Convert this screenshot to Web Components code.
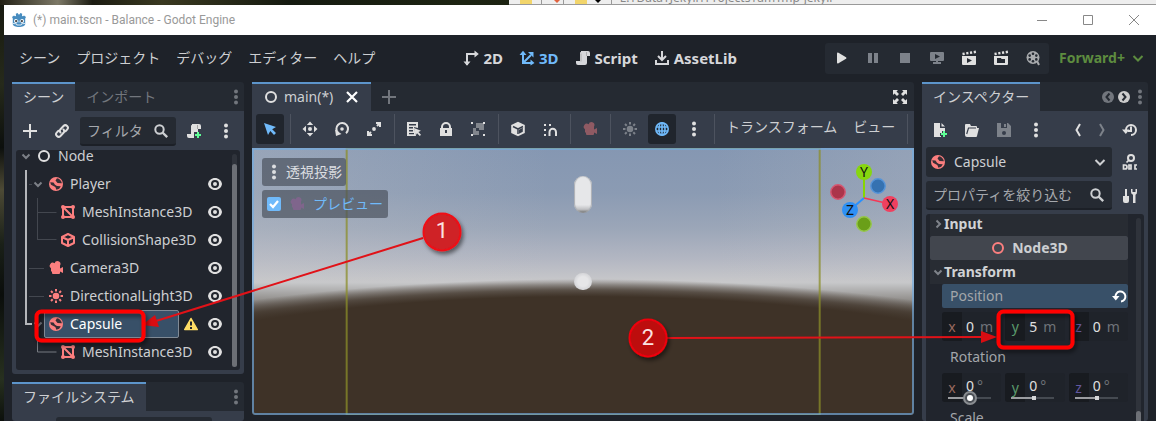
<!DOCTYPE html>
<html lang="ja">
<head>
<meta charset="utf-8">
<title>(*) main.tscn - Balance - Godot Engine</title>
<style>
  html, body { margin: 0; height: 100%; overflow: hidden; }
  body { font: 14px/20px "Noto Sans", "Noto Sans CJK JP", sans-serif; color: #cdcfd2; background: #14180f; }
</style>
</head>
<body>
<godot-desktop></godot-desktop>
<script>
const ICONS = {
  godot: '<path fill="#478cbf" d="M1 5l2-1.500 1 .8 1-.4L4.800 1.800 6.600 1l1 1.500h.8L9.400 1l1.800.8-.2 2.100 1 .4 1-.8L15 5l-.8 1.600V12c0 2-3 3-6.200 3s-6.200-1-6.200-3V6.600z"/><circle cx="4.900" cy="9" r="1.900" fill="#fff"/><circle cx="11.100" cy="9" r="1.900" fill="#fff"/><circle cx="5.100" cy="9.100" r="1.100" fill="#414042"/><circle cx="10.900" cy="9.100" r="1.100" fill="#414042"/><path d="M8 8.500v2M2 11.500l3.500.3.300 1.200h4.400l.3-1.200 3.500-.3" stroke="#fff" fill="none" stroke-width=".8"/>',
  plus: '<path d="M8 1v14M1 8h14" stroke="currentColor" stroke-width="2"/>',
  link: '<g fill="none" stroke="currentColor" stroke-width="2" stroke-linecap="round"><path d="M6.500 9.500a2.500 2.500 0 0 1 0-3.300L9.500 3a2.500 2.500 0 0 1 3.600 3.600L11.500 8.200"/><path d="M9.500 6.500a2.500 2.500 0 0 1 0 3.300L6.500 13a2.500 2.500 0 0 1-3.600-3.600L4.500 7.800"/></g>',
  search: '<circle cx="6.500" cy="6.500" r="4.200" fill="none" stroke="currentColor" stroke-width="2"/><path d="M9.500 9.500l4.700 4.700" stroke="currentColor" stroke-width="2.400"/>',
  script: '<path fill="currentColor" d="M6 1v1a1 1 0 0 0-1 1v8H1v2a2 2 0 0 0 2 2h7a2 2 0 0 0 2-2V6h3V3a2 2 0 0 0-2-2z"/><path d="M6 3.500v8M11.500 2v4" stroke="#0003" />',
  scriptadd: '<path fill="currentColor" d="M6 1v1a1 1 0 0 0-1 1v8H1v2a2 2 0 0 0 2 2h5V9h4V6h3V3a2 2 0 0 0-2-2z"/><path d="M11.500 2v4" stroke="#0004"/><path d="M12 9v6M9 12h6" stroke="#5fff97" stroke-width="2"/>',
  dots: '<g fill="currentColor"><circle cx="8" cy="2.500" r="2"/><circle cx="8" cy="8" r="2"/><circle cx="8" cy="13.500" r="2"/></g>',
  down: '<path d="M4.500 6.500L8 10l3.500-3.500" fill="none" stroke="currentColor" stroke-width="2"/>',
  bigdown: '<path d="M3.500 6L8 10.500 12.500 6" fill="none" stroke="currentColor" stroke-width="2"/>',
  right: '<path d="M6.500 4.500L10 8l-3.500 3.500" fill="none" stroke="currentColor" stroke-width="2"/>',
  node: '<circle cx="8" cy="8" r="5" fill="none" stroke="currentColor" stroke-width="2"/>',
  body: '<circle cx="8" cy="8" r="7" fill="#fc7f7f"/><path fill="#22262e" d="M9 2.200C11.500 2.600 13.500 4.500 13.900 7.300L9.500 7 7.500 4.500zM2.200 6.200L5.500 6.500 7 8.700l2 1.300 3.800.2-1.600 2.600-2.800 1L7.300 11 3 8.800z" opacity=".9"/><path fill="#fc7f7f" d="M3 9.500L7 12l1 2.500L4 13z"/>',
  mesh: '<g fill="none" stroke="#fc7f7f" stroke-width="2"><path d="M3 3h10v10H3zM3 3l10 10"/></g><g fill="#fc7f7f"><circle cx="3" cy="3" r="2"/><circle cx="13" cy="3" r="2"/><circle cx="3" cy="13" r="2"/><circle cx="13" cy="13" r="2"/></g>',
  shape: '<path d="M8 2l6 3v6l-6 3-6-3V5zM2 5l6 3 6-3M8 8v6" fill="none" stroke="#fc7f7f" stroke-width="2" stroke-linejoin="round"/>',
  camera: '<path fill="currentColor" d="M9.500 1A3 3 0 0 0 6.600 3.300 3 3 0 1 0 3 8.200V11l1 1v1a1 1 0 0 0 1 1h6a1 1 0 0 0 1-1v-1.500l3 1.500V7l-3 1.500V5.700A3 3 0 0 0 9.500 1z"/>',
  light: '<circle cx="8" cy="8" r="3.300" fill="currentColor"/><path d="M8 1v2.500M8 12.500V15M1 8h2.500M12.500 8H15M3 3l1.700 1.700M11.300 11.300L13 13M13 3l-1.700 1.700M4.700 11.300L3 13" stroke="currentColor" stroke-width="2"/>',
  eye: '<path fill="currentColor" d="M8 2C4.500 2 1.500 4.500 1 8c.5 3.500 3.500 6 7 6s6.500-2.500 7-6c-.5-3.500-3.500-6-7-6z"/><circle cx="8" cy="8" r="3" fill="none" stroke="#22262e" stroke-width="2"/>',
  warn: '<path fill="#ffdd65" stroke="#ffdd65" stroke-width="1.500" stroke-linejoin="round" d="M8 2.500L14.300 13.500H1.700z"/><path d="M8 5.500v4M8 11v2" stroke="#22262e" stroke-width="2"/>',
  d2: '<path d="M4 15V4h9" fill="none" stroke="currentColor" stroke-width="2"/><path fill="currentColor" d="M0.500 11.500h7L4 15.800zM11.500 0.500v7L15.800 4z"/>',
  d3: '<path d="M4 4v9h9M4 13l8-8" fill="none" stroke="currentColor" stroke-width="2"/><path fill="currentColor" d="M0.500 5L4 .8 7.500 5zM11.500 9.500v6L15.500 13zM9 2h5.500v5.500z"/>',
  asset: '<path d="M8 1v8M2 10v4h12v-4" fill="none" stroke="currentColor" stroke-width="2"/><path d="M4 6l4 4 4-4" fill="none" stroke="currentColor" stroke-width="2"/>',
  play: '<path fill="currentColor" d="M4 3.500v9a1 1 0 0 0 1.500.8l7.500-4.500a1 1 0 0 0 0-1.600L5.500 2.700A1 1 0 0 0 4 3.500z"/>',
  pause: '<path fill="currentColor" d="M3 3h4v10H3zM9 3h4v10H9z"/>',
  stop: '<path fill="currentColor" d="M3 3h10v10H3z"/>',
  remote: '<path fill="currentColor" fill-rule="evenodd" d="M2 2h12a1 1 0 0 1 1 1v7a1 1 0 0 1-1 1H9v1h3v2H4v-2h3v-1H2a1 1 0 0 1-1-1V3a1 1 0 0 1 1-1zM6 4v5l5-2.500z"/>',
  clapplay: '<path fill="currentColor" fill-rule="evenodd" d="M1 6h14v8a1 1 0 0 1-1 1H2a1 1 0 0 1-1-1zM6 8v5l5-2.500z"/><path d="M1.500 4L15 1.800" stroke="currentColor" stroke-width="2.500" stroke-dasharray="2.200 1.600"/>',
  clapdir: '<path fill="currentColor" fill-rule="evenodd" d="M1 6h14v8a1 1 0 0 1-1 1H2a1 1 0 0 1-1-1zM4 8v5h8V9H8.500L8 8z"/><path d="M1.500 4L15 1.800" stroke="currentColor" stroke-width="2.500" stroke-dasharray="2.200 1.600"/>',
  movie: '<circle cx="8" cy="7.500" r="6.500" fill="currentColor"/><path d="M12 11l2 4" stroke="currentColor" stroke-width="2"/><g fill="#252a32"><circle cx="8" cy="3.700" r="1.300"/><circle cx="8" cy="11.300" r="1.300"/><circle cx="4.700" cy="5.600" r="1.300"/><circle cx="11.300" cy="5.600" r="1.300"/><circle cx="4.700" cy="9.400" r="1.300"/><circle cx="11.300" cy="9.400" r="1.300"/></g>',
  close: '<path d="M3 3l10 10M13 3L3 13" stroke="currentColor" stroke-width="2.200"/>',
  expand: '<path fill="currentColor" d="M1 1h5L4.500 2.500 7 5 5 7 2.500 4.500 1 6zM15 1v5l-1.500-1.500L11 7 9 5l2.500-2.500L10 1zM1 15v-5l1.500 1.500L5 9l2 2-2.500 2.500L6 15zM15 15h-5l1.500-1.500L9 11l2-2 2.500 2.500L15 10z"/>',
  select: '<path fill="currentColor" d="M2 2l4 12 2.300-4L12 14l2-2-3.800-3.700L14 6z"/>',
  move: '<path fill="currentColor" d="M8 .5l3.200 3.500H4.800zM8 15.500l3.200-3.500H4.800zM.5 8L4 4.800v6.400zM15.500 8L12 4.800v6.400z"/><circle cx="8" cy="8" r="2" fill="currentColor"/>',
  rotate: '<path d="M4.200 12A5.800 5.800 0 1 1 12 12.200" fill="none" stroke="currentColor" stroke-width="2"/><circle cx="8" cy="8" r="1.800" fill="currentColor"/><path fill="currentColor" d="M1 8.500l1 6.500 5.500-2z"/>',
  scale: '<path d="M10 2h4v4M6 14H2v-4M13.500 2.500l-2.500 2.500M5 11l-2.500 2.500" fill="none" stroke="currentColor" stroke-width="2"/><circle cx="8" cy="8" r="1.900" fill="currentColor"/>',
  list: '<path fill="currentColor" fill-rule="evenodd" d="M1 1h11v6L8 6l2 9H1zM3 3v1.500h7V3zM3 6v1.500h4V6zM3 9v1.500h4V9zM3 12v1.300h5V12z"/><path fill="currentColor" d="M8 7l7 2.700-2.600 1.300L15 13.800 13.800 15 11 12.300 9.700 14.500z"/>',
  lock: '<path fill="currentColor" fill-rule="evenodd" d="M8 1a5 5 0 0 0-5 5v1H2v8h12V7h-1V6a5 5 0 0 0-5-5zm0 2a3 3 0 0 1 3 3v1H5V6a3 3 0 0 1 3-3zM7 9h2v3H7z"/>',
  group: '<path d="M6 2h8v7H9v5H3V7h3z" fill="currentColor" opacity=".45"/><path fill="currentColor" d="M1 1h2v2H1zM13 1h2v2h-2zM1 13h2v2H1zM13 13h2v2h-2z"/><path d="M6 7h3v3H6z" fill="#363d4a"/>',
  cube: '<path fill="currentColor" d="M8 .8l6.800 3.200v8L8 15.200 1.200 12V4z"/><path d="M3 5.500L8 8v5M8 8l5-2.500" stroke="#363d4a" stroke-width="1.500" fill="none"/><path fill="#363d4a" d="M9 8.700l3.800-1.900v3.900L9 12.800z"/>',
  snap: '<path d="M7.500 15v-4a3 3 0 0 1 6.500 0v4" fill="none" stroke="currentColor" stroke-width="2"/><path d="M2 3h2v2H2zM7 3h2v2H7zM2 8h2v2H2zM2 13h2v2H2z" fill="currentColor"/>',
  globe: '<g fill="none" stroke="currentColor" stroke-width="1.600"><circle cx="8" cy="8" r="6.200"/><ellipse cx="8" cy="8" rx="3" ry="6.200"/><path d="M8 2v12M2 6h12M2 10h12"/></g>',
  cleft: '<circle cx="8" cy="8" r="6" fill="currentColor"/><path d="M9.500 4.500L6.500 8l3 3.500" fill="none" stroke="#252a32" stroke-width="2"/>',
  cright: '<circle cx="8" cy="8" r="6" fill="currentColor"/><path d="M6.500 4.500l3 3.500-3 3.500" fill="none" stroke="#252a32" stroke-width="2"/>',
  newres: '<path fill="currentColor" d="M2 1h6v5h5v3h-3v2H8v3h1v1H2zM9.500 1L13 4.500H9.500z"/><path d="M12 9v6M9 12h6" stroke="#5fff97" stroke-width="2"/>',
  folder: '<path fill="currentColor" d="M1 13V3a1 1 0 0 1 1-1h4l1 2h5a1 1 0 0 1 1 1v1h2l-2 8a1 1 0 0 1-1 1H3a2 2 0 0 1-2-2z"/><path d="M2.700 12L4.500 6H12" stroke="#363d4a" fill="none" stroke-width="1.200"/>',
  save: '<path fill="currentColor" fill-rule="evenodd" d="M1 1h11l3 3v11H1zM5 1v5h6V1zM8 9a2 2 0 1 0 0 4 2 2 0 0 0 0-4z"/><path d="M8 2h2v3H8z" fill="currentColor"/>',
  back: '<path d="M10 2L6.500 8l3.500 6" fill="none" stroke="currentColor" stroke-width="2"/>',
  fwd: '<path d="M6 2l3.500 6L6 14" fill="none" stroke="currentColor" stroke-width="2"/>',
  history: '<path d="M4 8a5 5 0 1 1 5 5M9 4.500V9H6" fill="none" stroke="currentColor" stroke-width="2"/><path fill="currentColor" d="M0 7.500h7.500L3.800 12z"/>',
  docs: '<circle cx="9" cy="4" r="3" fill="none" stroke="currentColor" stroke-width="2"/><path d="M7 6L4.500 8.500M1.500 11v4H3a2 2 0 0 0 0-4zM8 11h1v4H7v-4zM15 11h-2v4h2" stroke="currentColor" stroke-width="1.700" fill="none"/>',
  tools: '<path fill="currentColor" d="M3 1h2v7h2v5a2 2 0 0 1-2 2H3a2 2 0 0 1-2-2V8h2zM9 1v3a3 3 0 0 0 2 2.800V15h2.500V6.800A3 3 0 0 0 15 4V1h-1.500v3h-3V1z"/>',
  revert: '<path d="M3.500 9.500A5 5 0 1 1 9 13.500" fill="none" stroke="currentColor" stroke-width="2"/><path fill="currentColor" d="M0 8h7.500L3.800 12.500z"/>',
  min: '<path d="M3 8.500h10" stroke="currentColor"/>',
  max: '<path d="M3.500 3.500h9v9h-9z" fill="none" stroke="currentColor"/>',
  x: '<path d="M3 3l10 10M13 3L3 13" stroke="currentColor"/>'
};

/* Registers an element whose shadow root is cloned from a template. */
function element(name, css, html) {
  const t = document.createElement('template');
  t.innerHTML = `<style>*{box-sizing:border-box}button,input,select{font:inherit;color:inherit;margin:0}button{background:none;border:0;padding:0}${css}</style>${html}`;
  customElements.define(name, class extends HTMLElement {
    constructor() { super(); this.attachShadow({ mode: 'open' }).append(t.content.cloneNode(true)); }
  });
}

customElements.define('ui-icon', class extends HTMLElement {
  constructor() { super(); this.attachShadow({ mode: 'open' }); }
  connectedCallback() {
    this.shadowRoot.innerHTML = `<style>:host{display:inline-block;flex:none;width:16px;height:16px}svg{display:block;width:100%;height:100%}</style><svg viewBox="0 0 16 16" aria-hidden="true">${ICONS[this.getAttribute('name')]}</svg>`;
  }
});

customElements.define('icon-button', class extends HTMLElement {
  constructor() { super(); this.attachShadow({ mode: 'open' }); }
  connectedCallback() {
    this.shadowRoot.innerHTML = `<style>:host{display:block;flex:none;width:28px;height:30px;color:#e0e0e0}:host([pressed]){background:#20252d;border-radius:3px;color:#70bafa}:host([off]){color:#7d828a}
      button{display:flex;align-items:center;justify-content:center;width:100%;height:100%;background:none;border:0;padding:0;color:inherit}</style>
      <button type="button" aria-label="${this.getAttribute('icon')}"><ui-icon name="${this.getAttribute('icon')}"></ui-icon></button>`;
  }
});

element('tool-sep', ':host{display:flex;flex:none;width:4px;height:30px;justify-content:center}i{width:1px;background:#4d535f}', '<i></i>');

element('title-bar', `
  :host{display:flex;height:30px;align-items:center;background:#fff;color:#999;padding:0 14px 0 7px;font:12px/16px Roboto,"Noto Sans",sans-serif}
  .t{margin-left:6px;flex:1}
  nav{display:flex;gap:30px;color:#888}`,
  '<ui-icon name="godot"></ui-icon><span class="t"><slot></slot></span><nav><ui-icon name="min"></ui-icon><ui-icon name="max"></ui-icon><ui-icon name="x"></ui-icon></nav>');

element('main-button', `
  :host{display:block;font-weight:700;font-size:15px;color:#d6d7da}:host([active]){color:#70bafa}
  button{display:flex;align-items:center;gap:4px}`,
  '<button type="button"><slot name="icon"></slot><slot></slot></button>');

element('menu-bar', `
  :host{display:flex;height:46px;align-items:center;padding-right:10px;margin-bottom:1px}
  .menus{display:flex;gap:16px;padding-left:15px}
  .sp{flex:1}
  .main{display:flex;gap:16px}
  .play{display:flex;background:#252a32;border-radius:3px;height:31px}
  .play icon-button{width:32px}
  .fw{position:relative;display:flex;align-items:center;color:#5d8c3f;font-weight:700;margin-left:10px}
  select{appearance:none;border:0;background:none;padding:0;width:88px}
  .fw ui-icon{margin-left:-17px}`,
  `<div class="menus"><button>シーン</button><button>プロジェクト</button><button>デバッグ</button><button>エディター</button><button>ヘルプ</button></div>
  <div class="sp"></div>
  <div class="main"><main-button><ui-icon slot="icon" name="d2"></ui-icon>2D</main-button><main-button active><ui-icon slot="icon" name="d3"></ui-icon>3D</main-button><main-button><ui-icon slot="icon" name="script"></ui-icon>Script</main-button><main-button><ui-icon slot="icon" name="asset"></ui-icon>AssetLib</main-button></div>
  <div class="sp"></div>
  <div class="play"><icon-button icon="play"></icon-button><icon-button off icon="pause"></icon-button><icon-button off icon="stop"></icon-button><icon-button off icon="remote"></icon-button><icon-button icon="clapplay"></icon-button><icon-button icon="clapdir"></icon-button><icon-button icon="movie" style="color:#a9abae"></icon-button></div>
  <label class="fw"><select aria-label="Renderer"><option>Forward+</option></select><ui-icon name="bigdown"></ui-icon></label>`);

element('dock-panel', `
  :host{display:flex;flex-direction:column;min-height:0}
  header{display:flex;height:29px;flex:none;background:#252a32;border-radius:3px 3px 0 0;align-items:stretch}
  .tab{border-top:2px solid #5d95cb;background:#363d4a;padding:0 11px 1px;display:flex;align-items:center;gap:5px}
  .extra{display:flex;flex:1;align-items:center;color:#72767d}
  .body{flex:1;min-height:0;background:#363d4a;border-radius:0 0 3px 3px;display:flex;flex-direction:column}`,
  '<header><div class="tab"><slot name="tab"></slot></div><div class="extra"><slot name="extra"></slot></div></header><div class="body"><slot></slot></div>');

element('search-box', `
  :host{display:flex;align-items:center;height:29px;background:#252a32;border-bottom:2px solid #1c2027;border-radius:3px;padding:0 7px;min-width:0}
  input{flex:1;width:0;min-width:0;border:0;padding:0;background:none;outline:0;height:24px}
  input::placeholder{color:#a5a8ad;opacity:1}`, '<input type="text"><ui-icon name="search"></ui-icon>');
function fillSearch(root) {
  root.querySelectorAll('search-box').forEach(b => {
    const i = b.shadowRoot.querySelector('input');
    i.placeholder = b.getAttribute('hint'); i.setAttribute('aria-label', b.getAttribute('hint'));
  });
}

element('tree-row', `
  :host{display:flex;height:28px;align-items:center;padding:0 17px 0 calc(var(--level,0)*12px);color:#cdcfd2;position:relative}
  .arrow{width:20px;height:16px;flex:none;display:flex;justify-content:center;color:#7c8087}
  .item{flex:1;display:flex;align-items:center;gap:6px;height:28px;white-space:nowrap}
  :host([selected]) .item{flex:none;width:135px;margin-left:-4px;padding-left:3px;border:1px solid #808a95;border-radius:2px;background:#385068;color:#fff}
  .end{display:flex;gap:8px;margin-left:auto;color:#e0e0e0}`,
  '<span class="arrow"><slot name="arrow"></slot></span><span class="item"><slot name="icon"></slot><slot></slot></span><span class="end"><slot name="end"></slot></span>');

element('scene-tree', `
  :host{display:block;position:relative;flex:1;background:#21252d;border-radius:3px;overflow:hidden}
  .rows{margin-top:-8px}
  .guides{position:absolute;left:0;top:0}
  .track{position:absolute;right:3px;top:4px;bottom:3px;width:5px;border-radius:3px;background:#2f333b}
  .track i{position:absolute;inset:10px 0 0;border-radius:3px;background:#6d7076}`,
  `<svg class="guides" width="60" height="220" fill="none"><path d="M10 20v154h6" stroke="#b4b6ba" stroke-width="2"/><path d="M13 34.500h3M13 118.500h15M13 146.500h15M21.500 48v42M21.500 62.500h19M21.500 89.500h19" stroke="#43474f"/><path d="M21.500 188v14h19" stroke="#777b81"/></svg>
  <div class="rows">
  <tree-row><ui-icon slot="arrow" name="down"></ui-icon><ui-icon slot="icon" name="node" style="color:#e0e0e0"></ui-icon>Node</tree-row>
  <tree-row style="--level:1"><ui-icon slot="arrow" name="down"></ui-icon><ui-icon slot="icon" name="body"></ui-icon>Player<ui-icon slot="end" name="eye"></ui-icon></tree-row>
  <tree-row style="--level:2"><ui-icon slot="icon" name="mesh"></ui-icon>MeshInstance3D<ui-icon slot="end" name="eye"></ui-icon></tree-row>
  <tree-row style="--level:2"><ui-icon slot="icon" name="shape"></ui-icon>CollisionShape3D<ui-icon slot="end" name="eye"></ui-icon></tree-row>
  <tree-row style="--level:1"><ui-icon slot="icon" name="camera" style="color:#fc7f7f"></ui-icon>Camera3D<ui-icon slot="end" name="eye"></ui-icon></tree-row>
  <tree-row style="--level:1"><ui-icon slot="icon" name="light" style="color:#fc7f7f"></ui-icon>DirectionalLight3D<ui-icon slot="end" name="eye"></ui-icon></tree-row>
  <tree-row selected style="--level:1"><ui-icon slot="arrow" name="down"></ui-icon><ui-icon slot="icon" name="body"></ui-icon>Capsule<ui-icon slot="end" name="warn"></ui-icon><ui-icon slot="end" name="eye"></ui-icon></tree-row>
  <tree-row style="--level:2"><ui-icon slot="icon" name="mesh"></ui-icon>MeshInstance3D<ui-icon slot="end" name="eye"></ui-icon></tree-row>
  </div><div class="track"><i></i></div>`);

element('left-column', `
  :host{display:flex;flex-direction:column;width:232px;flex:none;gap:8px}
  .scene{flex:1}
  .files{height:39px;flex:none}
  .tools{display:flex;height:39px;padding:6px 4px 4px;gap:4px}
  .tools icon-button{height:28px}
  search-box{flex:1}
  scene-tree{margin:0 4px 4px}
  .imp{flex:1;padding-left:11px}
  .files i{display:block;margin:6px 32px 0 44px;height:4px;background:#252a32;border-radius:3px 3px 0 0}`,
  `<dock-panel class="scene"><span slot="tab">シーン</span><span slot="extra" class="imp">インポート</span><ui-icon slot="extra" name="dots"></ui-icon>
    <div class="tools"><icon-button icon="plus"></icon-button><icon-button icon="link"></icon-button><search-box hint="フィルタ"></search-box><icon-button icon="scriptadd"></icon-button><icon-button icon="dots"></icon-button></div>
    <scene-tree></scene-tree></dock-panel>
  <dock-panel class="files"><span slot="tab">ファイルシステム</span><span slot="extra" class="imp"></span><ui-icon slot="extra" name="dots"></ui-icon><i></i></dock-panel>`);

element('view-port', `
  :host{display:block;position:relative;flex:1;overflow:hidden;border-radius:0 0 3px 3px;
    background:linear-gradient(#0000 134px,#c6c7c900 135px,#3e322700 136px),
      radial-gradient(ellipse 620px 136px at 50% 100%,#3e3227 0,#3e3227 87%,#3e3227c0 92%,#3e322766 96%,#3e322700 100%),
      linear-gradient(#0000 134px,#c6c7c9 135px,#9b9997 149px,#66605a 166px,#463b31 185px,#3e3227 205px),
      linear-gradient(90deg,#c8c8ca48,#c8c8ca00 45%,#c8c8ca00 70%,#c8c8ca38),
      linear-gradient(#8597b2,#8b9bb3 45px,#9ba6b8 80px,#b2b6c2 110px,#c8c8ca 134px)}
  .edge{position:absolute;inset:0;border:2px solid #72abdfaa;border-radius:0 0 3px 3px}
  .frame{position:absolute;top:0;bottom:0;left:50%;aspect-ratio:16/9;transform:translateX(-50%);border:1px solid #8b8d2a;border-width:1px 2px;opacity:.75}
  .ui{position:absolute;left:10px;top:10px;display:flex;flex-direction:column;gap:4px;align-items:flex-start}
  .ui>*{display:flex;align-items:center;height:28px;background:#4a515dB0;border-radius:3px;color:#dcdee1}
  .persp{padding:0 4px;gap:4px}
  .prev{padding:0 5px;gap:8px;color:#70bafa}
  .prev ui-icon{color:#7f658c}
  input{appearance:none;width:14px;height:14px;border-radius:2px;background:#70bafa url("data:image/svg+xml,%3Csvg xmlns='http://www.w3.org/2000/svg' viewBox='0 0 14 14'%3E%3Cpath d='M3 7l3 3 5-6' fill='none' stroke='white' stroke-width='2.200'/%3E%3C/svg%3E")}
  .obj{position:absolute;left:50%;width:18px;transform:translateX(-50%)}
  .cap{top:28px;height:37px;border-radius:9px;background:linear-gradient(#e6e7e9 78%,#c0c1c4 90%,#666);box-shadow:inset 1px 0 1px #aaadb3,inset -1px 0 1px #aaadb3}
  .ball{top:125px;height:17px;border-radius:9px;background:radial-gradient(#e6e6e8 40%,#c3c4c8)}
  .gizmo{position:absolute;right:6px;top:8px;font:16px "Noto Sans",sans-serif}`,
  `<div class="frame"></div><div class="edge"></div><div class="obj cap"></div><div class="obj ball"></div>
  <svg class="gizmo" width="84" height="80" text-anchor="middle"><path d="M40 42V16" stroke="#87d602" stroke-width="2"/><path d="M40 42L26 54" stroke="#2890ff" stroke-width="2"/><path d="M40 42l26 6" stroke="#f63655" stroke-width="1.500"/>
   <circle cx="14" cy="36" r="7.200" fill="#ab354b" stroke="#d55671" stroke-width="1.500"/><circle cx="54" cy="30" r="7.200" fill="#3572b1" stroke="#5594d9" stroke-width="1.500"/><circle cx="40" cy="68" r="7.200" fill="#6a9f18" stroke="#95c748" stroke-width="1.500"/>
   <circle cx="40" cy="16" r="8" fill="#87d60f"/><circle cx="66" cy="48" r="8" fill="#f0405f"/><circle cx="26" cy="54" r="8" fill="#2e90f5"/>
   <g fill="#111" font-size="14"><text x="40" y="21">Y</text><text x="66" y="53">X</text><text x="26" y="59">Z</text></g></svg>
  <div class="ui"><button class="persp" type="button"><ui-icon name="dots"></ui-icon>透視投影</button><label class="prev"><input type="checkbox" checked><ui-icon name="camera"></ui-icon><span>プレビュー</span></label></div>`);

element('center-column', `
  :host{display:flex;flex:1;min-width:0;margin-bottom:6px}
  dock-panel{flex:1;min-width:0}
  .tabs{display:flex;align-items:center;flex:1;padding:0 6px 0 10px}
  .tabs .sp{flex:1}
  .tools{display:flex;height:37px;padding:3px 4px 0;gap:4px}
  .tools button{padding:0 6px 4px;height:30px;white-space:nowrap}
  .x{color:#fff;margin-left:6px}`,
  `<dock-panel><ui-icon slot="tab" name="node" style="color:#e0e0e0"></ui-icon><span slot="tab">main(*)</span><ui-icon slot="tab" class="x" name="close"></ui-icon>
   <div slot="extra" class="tabs"><ui-icon name="plus"></ui-icon><span class="sp"></span><ui-icon name="expand" style="color:#e0e0e0"></ui-icon></div>
   <div class="tools"><icon-button pressed icon="select"></icon-button><tool-sep></tool-sep><icon-button icon="move"></icon-button><icon-button icon="rotate"></icon-button><icon-button icon="scale"></icon-button><tool-sep></tool-sep><icon-button icon="list"></icon-button><icon-button icon="lock"></icon-button><icon-button icon="group"></icon-button><tool-sep></tool-sep><icon-button icon="cube"></icon-button><icon-button icon="snap"></icon-button><tool-sep></tool-sep><icon-button icon="camera" style="color:#8f5a63"></icon-button><tool-sep></tool-sep><icon-button off icon="light"></icon-button><icon-button pressed icon="globe"></icon-button><icon-button icon="dots"></icon-button><tool-sep></tool-sep><button>トランスフォーム</button><button>ビュー</button><tool-sep></tool-sep></div>
   <view-port></view-port></dock-panel>`);

customElements.define('axis-field', class extends HTMLElement {
  constructor() { super(); this.attachShadow({ mode: 'open' }); }
  connectedCallback() {
    const a = n => this.getAttribute(n), deg = a('unit') === '°';
    this.shadowRoot.innerHTML = `<style>*{box-sizing:border-box}
      :host{display:flex;position:relative;flex:1;height:29px;background:#1f232a;border-radius:3px;align-items:center;overflow:visible}
      label{display:flex;width:100%;height:100%;align-items:center;line-height:24px}
      .n{width:20px;height:100%;background:#181b20;border-radius:3px 0 0 3px;display:flex;align-items:center;justify-content:center;color:var(--axis)}
      .v{border:0;background:none;padding:0;margin:0 0 0 4px;width:9px;font:inherit;color:#e0e0e0}
      .u{margin-left:5px;color:#6f7379} .deg .u{margin-left:2px}
      .deg{padding-bottom:3px} .deg .n{height:29px;margin-bottom:-3px}
      .s{appearance:none;position:absolute;left:6px;bottom:0;width:43px;height:9px;margin:0;background:linear-gradient(90deg,#9b9da1 53%,#454a51 53%) 0 50%/100% 2px no-repeat}
      .s::-webkit-slider-thumb{appearance:none;width:4px;height:4px;background:#d5d6d8}
      :host([hot]) .s::-webkit-slider-thumb{width:6px;height:6px;border-radius:50%;background:#fff;box-shadow:0 0 0 2px #4b4f55,0 0 0 4px #8a8d91}</style>
      <label class="${deg ? 'deg' : ''}"><span class="n">${a('axis')}</span><input class="v" value="${a('value')}"><span class="u">${a('unit')}</span></label>
      ${deg ? `<input class="s" type="range" aria-label="${a('axis')}" value="52">` : ''}`;
  }
});

element('inspector-column', `
  :host{display:flex;width:226px;flex:none}
  dock-panel{flex:1}
  .hist{display:flex;flex:1;justify-content:flex-end;align-items:center}
  .tools{display:flex;height:36px;padding:3px 4px 0;gap:4px}
  .tools icon-button{height:32px}
  .sp{flex:1}
  .line{display:flex;gap:4px;padding:0 4px;height:30px;margin-bottom:4px}
  .obj{flex:1;display:flex;align-items:center;background:#252a32;border-radius:3px;padding:0 4px}
  select{appearance:none;flex:1;border:0;background:none;padding:0 0 0 8px}
  search-box{flex:1}
  .last{height:29px}
  .props{position:relative;flex:1;margin:0 4px;background:#21252d;border-radius:3px 3px 0 0;overflow:hidden;padding:0 16px 0 4px}
  .sec{height:24px;display:flex;align-items:center;background:#282c33;font-weight:700;color:#d0d2d5}
  .sec ui-icon{margin-right:-2px;color:#7f838a}
  .sec.first{height:22px;padding-bottom:2px}
  .cat{height:24px;display:flex;align-items:center;justify-content:center;gap:6px;background:#42464e;font-weight:700;border-radius:2px}
  .cat ui-icon{color:#fc7f7f}
  .grp{display:flex;flex-direction:column;gap:4px;margin-left:12px}
  .lab{height:24px;display:flex;align-items:center;padding-left:8px;color:#a3a6aa}
  .lab.sel{background:#385068;justify-content:space-between;border-radius:2px}
  .lab.sel ui-icon{color:#fff}
  .xyz{display:flex;gap:4px}
  .track{position:absolute;right:3px;top:4px;bottom:0;width:5px;border-radius:3px;background:#2f333b}
  .track i{position:absolute;inset:auto 0 -8px;height:18px;border-radius:3px;background:#6d7076}`,
  `<dock-panel><span slot="tab">インスペクター</span><div slot="extra" class="hist"><ui-icon name="cleft"></ui-icon><ui-icon name="cright" style="color:#ccc"></ui-icon><ui-icon name="dots"></ui-icon></div>
  <div class="tools"><icon-button icon="newres"></icon-button><icon-button icon="folder"></icon-button><icon-button off icon="save"></icon-button><icon-button icon="dots"></icon-button><span class="sp"></span><icon-button style="width:20px" icon="back"></icon-button><icon-button style="width:20px" off icon="fwd"></icon-button><icon-button icon="history"></icon-button></div>
  <div class="line"><label class="obj"><ui-icon name="body"></ui-icon><select aria-label="Object"><option>Capsule</option></select><ui-icon name="bigdown"></ui-icon></label><icon-button icon="docs"></icon-button></div>
  <div class="line last"><search-box hint="プロパティを絞り込む"></search-box><icon-button icon="tools"></icon-button></div>
  <div class="props"><div class="sec first"><ui-icon name="right"></ui-icon>Input</div><div class="cat"><ui-icon name="node"></ui-icon>Node3D</div><div class="sec"><ui-icon name="down"></ui-icon>Transform</div>
   <div class="grp"><div class="lab sel">Position<ui-icon name="revert"></ui-icon></div>
   <div class="xyz"><axis-field style="--axis:#9a6a5f" axis="x" value="0" unit="m"></axis-field><axis-field style="--axis:#5b9a6c" axis="y" value="5" unit="m"></axis-field><axis-field style="--axis:#6358a0" axis="z" value="0" unit="m"></axis-field></div>
   <div class="lab">Rotation</div>
   <div class="xyz"><axis-field hot style="--axis:#9a6a5f" axis="x" value="0" unit="°"></axis-field><axis-field style="--axis:#5b9a6c" axis="y" value="0" unit="°"></axis-field><axis-field style="--axis:#6358a0" axis="z" value="0" unit="°"></axis-field></div>
   <div class="lab">Scale</div></div><div class="track"><i></i></div></div></dock-panel>`);

/* Callouts drawn over the window. */
element('call-outs', `:host{position:absolute;inset:0;pointer-events:none}svg{width:100%;height:100%;display:block}text{font:22px Roboto,"Noto Sans",sans-serif;fill:#fbe3e3}`,
  `<svg><defs><filter id="s" x="-20%" y="-20%" width="150%" height="150%" filterUnits="objectBoundingBox"><feDropShadow dx="2" dy="3" stdDeviation="2" flood-opacity=".5"/></filter></defs>
  <g stroke="#e11218" stroke-width="2" fill="none"><path d="M423 238L156 321"/><path d="M667 338l316-1"/></g>
  <path fill="#d90d12" d="M142 325l13-10 4 12zM997 337l-16-6v12z"/>
  <g filter="url(#s)"><rect x="36.500" y="311.500" width="107" height="29" rx="5" fill="none" stroke="#f00" stroke-width="4"/><rect x="998.500" y="311.500" width="74" height="36" rx="5" fill="none" stroke="#f00" stroke-width="4"/>
  <circle cx="442" cy="232" r="18.500" fill="#cf2026" stroke="#f01014" stroke-width="2"/><circle cx="648" cy="338" r="18.500" fill="#bd0a0c" stroke="#ee0508" stroke-width="2"/></g>
  <text x="442" y="238" text-anchor="middle">1</text><text x="648" y="345" text-anchor="middle">2</text></svg>`);

element('godot-desktop', `
  :host{display:flex;flex-direction:column;position:relative;height:100vh;overflow:hidden;padding-left:4px;background:linear-gradient(#17190f,#262a1b 20%,#0c0f0d 35%,#4d4a35 45%,#1a2018 58%,#0a0d0b 70%,#27301f 90%,#0c100c)}
  .behind{height:5px;flex:none;display:flex;justify-content:flex-end;margin-left:-4px;background:linear-gradient(90deg,#222014,#7d7967 5%,#1c1c12 8%,#3a3920 14%,#151a10 25%,#1d2412 40%,#10150c)}
  .bar{width:56%;overflow:hidden;background:#eee;border-bottom:1px solid #999;color:#888;display:flex}
  .bar span{margin-left:111px;font-size:12px;line-height:16px;margin-top:-10px;white-space:nowrap}
  .bar svg{position:absolute}
  .win{flex:1;min-height:0;display:flex;flex-direction:column;background:#1e2229}
  .cols{flex:1;min-height:0;display:flex;gap:8px;padding:0 8px}`,
  `<div class="behind"><div class="bar"><svg width="110" height="4"><path fill="#f2d56b" d="M11 0h12v4H11zM66 0h12v4H66z"/><path stroke="#999" d="M32.500 0v4M54.500 0v4M102.500 0v4"/><path fill="#e0623f" d="M45 0h6l-3 3z"/><path d="M86 0h6l-3 3z"/></svg><span>E:¥Data¥Jekyll¥Projects¥amTmp-jekyll</span></div></div>
  <div class="win"><title-bar>(*) main.tscn - Balance - Godot Engine</title-bar><menu-bar></menu-bar>
  <div class="cols"><left-column></left-column><center-column></center-column><inspector-column></inspector-column></div></div><call-outs></call-outs>`);

const desk = document.querySelector('godot-desktop').shadowRoot;
for (const n of ['left-column', 'inspector-column']) fillSearch(desk.querySelector(n).shadowRoot);
</script>
</body>
</html>
